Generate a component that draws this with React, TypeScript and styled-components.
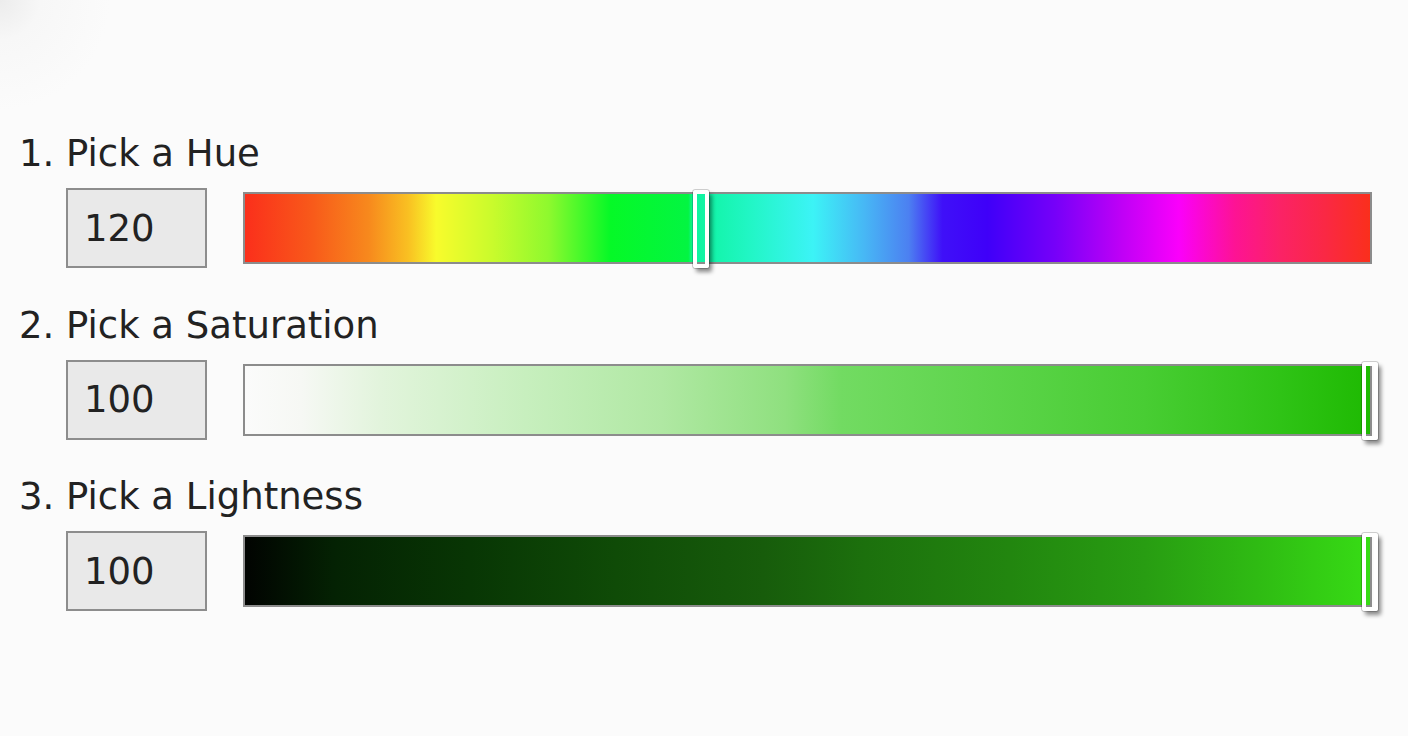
import React from "react";
import styled, { createGlobalStyle } from "styled-components";

const Global = createGlobalStyle`
  html, body {
    margin: 0;
    padding: 0;
    background: #fbfbfb;
  }
  body {
    font-family: "DejaVu Sans", Verdana, sans-serif;
    color: #222;
  }
`;

const Page = styled.div`
  width: 1408px;
  height: 736px;
  box-sizing: border-box;
  padding: 132px 36px 0 19px;
  display: flex;
  flex-direction: column;
  gap: 35.5px;
  background: radial-gradient(circle at 0 0, #ececec 0, #f7f7f7 40px, #fbfbfb 110px);
`;

const Section = styled.section`
  display: flex;
  flex-direction: column;
  gap: 12px;
`;

const Label = styled.h2`
  margin: 0;
  font-size: 37px;
  line-height: 44px;
  font-weight: 400;
  color: #222;
`;

const Controls = styled.div`
  display: flex;
  align-items: center;
  gap: 36px;
  padding-left: 47px;
  height: 80px;
`;

const ValueBox = styled.input`
  box-sizing: border-box;
  width: 141px;
  height: 80px;
  margin: 0;
  padding: 0 0 0 16px;
  border: 2px solid #8d8d8d;
  background: #e9e9e9;
  font-family: "DejaVu Sans", Verdana, sans-serif;
  font-size: 37px;
  color: #222;
  outline: none;
`;

const Track = styled.div<{ $bg: string }>`
  position: relative;
  flex: 1;
  height: 72px;
  box-sizing: border-box;
  border: 2px solid #8c8c8c;
  background: ${(p) => p.$bg};
`;

const Thumb = styled.div`
  position: absolute;
  top: -4px;
  width: 16px;
  height: 78px;
  box-sizing: border-box;
  transform: translateX(-50%);
  border: 4px solid #fff;
  border-radius: 2px;
  outline: 1px solid rgba(0, 0, 0, 0.18);
  box-shadow: 3px 4px 4px rgba(0, 0, 0, 0.45);
`;

const hue = `linear-gradient(90deg,
  #fb2f1b 0%,
  #f85a1a 6%,
  #f7891d 11%,
  #f9c022 14.5%,
  #f8fb2c 17%,
  #c9fb2c 22%,
  #8ef92e 27%,
  #05f927 32.5%,
  #03f542 39.4%,
  #0cf49c 39.8%,
  #22f6c6 45%,
  #3cf3f6 50.5%,
  #47b8f5 55%,
  #4c80f1 59%,
  #3f10f8 62%,
  #3f00f9 66%,
  #7600f9 72%,
  #c000f6 78%,
  #fa00fb 83%,
  #fd1394 88%,
  #fb2266 92%,
  #fa2844 96%,
  #fa2f1c 100%)`;

const saturation = `linear-gradient(90deg,
  #fbfbfb 0%,
  #f6f8f4 5%,
  #e2f4dc 12%,
  #c7efbe 25%,
  #b0e8a3 37%,
  #8fe07f 48%,
  #72db62 53%,
  #5fd54d 65%,
  #48cd33 80%,
  #2fc316 92%,
  #1eba02 100%)`;

const lightness = `linear-gradient(90deg,
  #010301 0%,
  #042203 8%,
  #083604 20%,
  #0f4b07 33%,
  #175c0b 46%,
  #1c700d 55%,
  #22860f 68%,
  #289d12 80%,
  #2fbb13 90%,
  #37dc15 100%)`;

type Row = { label: string; value: number; bg: string; pos: number };

const rows: Row[] = [
  { label: "1. Pick a Hue", value: 120, bg: hue, pos: 40.5 },
  { label: "2. Pick a Saturation", value: 100, bg: saturation, pos: 100 },
  { label: "3. Pick a Lightness", value: 100, bg: lightness, pos: 100 },
];

export default function App() {
  return (
    <>
      <Global />
      <Page>
        {rows.map((r) => (
          <Section key={r.label}>
            <Label>{r.label}</Label>
            <Controls>
              <ValueBox readOnly value={r.value} />
              <Track $bg={r.bg}>
                <Thumb style={{ left: `${r.pos}%` }} />
              </Track>
            </Controls>
          </Section>
        ))}
      </Page>
    </>
  );
}
